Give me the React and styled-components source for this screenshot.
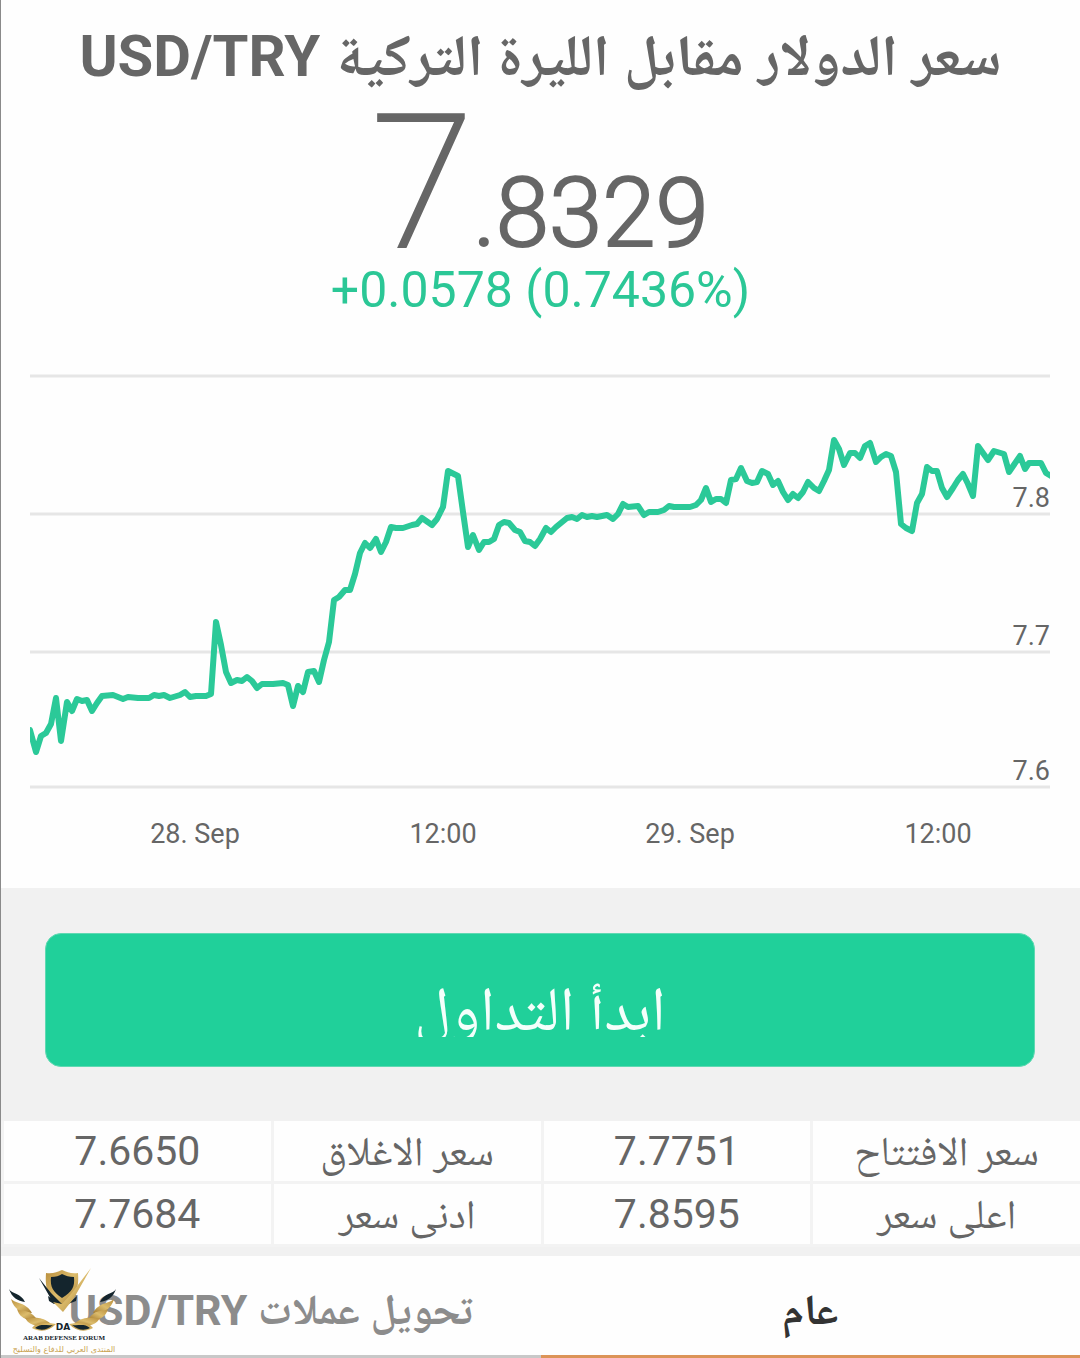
import React from "react";
import styled, { createGlobalStyle } from "styled-components";

const GlobalStyle = createGlobalStyle`
  * { box-sizing: border-box; }
  body {
    margin: 0;
    background: #fefefe;
    color: #666;
    font-family: Roboto, "Noto Naskh Arabic UI", "Noto Naskh Arabic", "DejaVu Sans", sans-serif;
  }
`;

const Page = styled.main`
  border-left: 1px solid #8a8a8a;
  background: #fefefe;
`;

const Quote = styled.header`
  display: flex;
  flex-direction: column;
  align-items: center;
  padding: 27px 16px 0;
`;

const Title = styled.h1`
  margin: 0;
  font-size: 58px;
  line-height: 72px;
  font-weight: 700;
  white-space: nowrap;
`;

const Pair = styled.bdi`
  line-height: 1;
  vertical-align: 12%;
`;

const Price = styled.div`
  display: flex;
  align-items: baseline;
  direction: ltr;
  height: 161px;
  font-weight: 300;
  font-size: 96px;
  line-height: 168px;
  -webkit-text-stroke: 2px #666;
`;

const Whole = styled.span`
  font-size: 184px;
  font-weight: 100;
  -webkit-text-stroke: 4px #666;
`;

const Change = styled.div`
  direction: ltr;
  font-size: 50px;
  line-height: 60px;
  color: #2bc796;
`;

const ChartBox = styled.section`
  padding: 50px 30px 32px 29px;
`;

const ChartSvg = styled.svg`
  display: block;
  width: 100%;
  height: auto;
  font-size: 27px;
  direction: ltr;
`;

const Cta = styled.section`
  background: #f1f1f1;
  padding: 45px 45px 54px 44px;
`;

const TradeButton = styled.button`
  display: flex;
  justify-content: center;
  align-items: flex-start;
  width: 100%;
  height: 134px;
  padding: 30px 0;
  border: 1px solid #5fd9b2;
  border-radius: 16px;
  background: #20d09a;
  color: #f4fffb;
  font-family: inherit;
  font-size: 62px;
`;

const TradeLabel = styled.span`
  display: block;
  height: 73px;
  line-height: 106px;
  padding: 0 8px;
  overflow: hidden;
`;

const StatTable = styled.table`
  width: 100%;
  table-layout: fixed;
  border-collapse: separate;
  border-spacing: 0;
  background: #f3f3f3;
  border-bottom: 9px solid #f1f1f1;
`;

const cell = `
  height: 63px;
  padding: 0;
  border: solid #f3f3f3;
  border-width: 0 0 3px 3px;
  background: #fefefe;
  text-align: center;
  vertical-align: middle;
  font-size: 41px;
  line-height: 48px;
  font-weight: 400;
  white-space: nowrap;
`;

const StatName = styled.th`
  ${cell}
  padding-top: 12px;
`;

const StatValue = styled.td`
  ${cell}
`;

const TabBar = styled.nav`
  position: relative;
  display: grid;
  grid-template-columns: 1fr 1fr;
`;

const Tab = styled.button`
  height: 102px;
  padding: 16px 0 0;
  border: 0;
  border-bottom: 3px solid ${(p) => (p.$active ? "#dc9458" : "#c8c8c8")};
  background: #fefefe;
  color: ${(p) => (p.$active ? "#333" : "#8c8c8c")};
  font-family: inherit;
  font-size: 43px;
  font-weight: 700;
  white-space: nowrap;
`;

const Watermark = styled.svg`
  position: absolute;
  left: 7px;
  bottom: 0;
  width: 112px;
  height: 90px;
  pointer-events: none;
`;

const LINE = [
  [30, 730], [36, 752], [41, 736], [46, 733], [51, 724], [56, 698], [61, 741], [67, 702], [72, 711], [77, 699],
  [82, 701], [87, 700], [92, 711], [97, 703], [102, 696], [113, 695], [118, 697], [123, 699], [128, 697], [138, 698],
  [149, 698], [154, 695], [159, 696], [164, 695], [170, 698], [180, 695], [185, 692], [190, 697], [196, 696], [206, 696],
  [211, 694], [216, 622], [221, 645], [226, 672], [231, 683], [237, 680], [242, 681], [247, 677], [252, 681], [257, 688],
  [262, 684], [273, 684], [283, 683], [288, 685], [293, 706], [298, 686], [303, 692], [308, 672], [314, 671], [319, 682],
  [324, 660], [329, 642], [334, 600], [339, 597], [345, 590], [350, 590], [355, 574], [360, 553], [365, 543], [370, 548],
  [376, 539], [381, 552], [386, 542], [391, 527], [396, 528], [403, 528], [412, 525], [417, 524], [422, 518], [432, 525],
  [437, 519], [443, 507], [448, 471], [458, 476], [463, 512], [468, 547], [473, 535], [479, 550], [484, 542], [489, 542],
  [494, 539], [499, 525], [504, 522], [509, 523], [515, 530], [520, 532], [525, 541], [530, 542], [535, 546], [540, 539],
  [546, 528], [551, 532], [556, 527], [567, 518], [572, 517], [577, 519], [582, 515], [587, 517], [592, 516], [597, 517],
  [607, 515], [613, 519], [618, 514], [623, 504], [628, 507], [638, 506], [644, 515], [649, 512], [658, 512], [664, 510],
  [669, 506], [674, 507], [690, 507], [696, 505], [701, 500], [706, 488], [711, 502], [716, 499], [721, 499], [726, 503],
  [731, 480], [736, 479], [741, 468], [747, 481], [752, 483], [757, 482], [762, 471], [768, 474], [773, 485], [778, 481],
  [783, 492], [788, 500], [793, 494], [798, 498], [803, 492], [808, 482], [814, 488], [819, 491], [824, 481], [829, 470],
  [834, 440], [839, 449], [844, 465], [850, 453], [855, 453], [860, 458], [865, 446], [870, 443], [876, 462], [881, 457],
  [886, 454], [891, 456], [896, 472], [901, 524], [906, 528], [912, 531], [917, 503], [922, 494], [927, 467], [932, 471],
  [937, 471], [942, 488], [947, 497], [953, 488], [958, 480], [963, 474], [968, 484], [973, 496], [978, 446], [983, 453],
  [988, 460], [994, 451], [1004, 454], [1009, 472], [1020, 456], [1025, 469], [1029, 463], [1041, 463], [1046, 473], [1051, 476],
];

const GRID = [376, 514, 652, 787];
const VALUES = [["7.8", 507], ["7.7", 645], ["7.6", 780]];
const TIMES = [["28. Sep", 195], ["12:00", 443], ["29. Sep", 690], ["12:00", 938]];

function PriceChart() {
  return (
    <ChartBox>
      <ChartSvg viewBox="30 370 1020 486" role="img" aria-label="USD/TRY">
        {GRID.map((y) => (
          <line key={y} x1="30" x2="1050" y1={y} y2={y} stroke="#e6e6e6" strokeWidth="3" />
        ))}
        <polyline
          points={LINE.map((p) => p.join(",")).join(" ")}
          fill="none"
          stroke="#2bc998"
          strokeWidth="6"
          strokeLinejoin="round"
          strokeLinecap="round"
        />
        {VALUES.map(([label, y]) => (
          <text key={label} x="1050" y={y} textAnchor="end" fill="#666">{label}</text>
        ))}
        {TIMES.map(([label, x]) => (
          <text key={x} x={x} y="843" textAnchor="middle" fill="#666">{label}</text>
        ))}
      </ChartSvg>
    </ChartBox>
  );
}

function Wing() {
  return (
    <g>
      <path d="M1 21 C4 26 13 25 17 34 C10 33 4 30 1 21Z" fill="#14252d" />
      <path d="M3 31 C8 36 18 34 24 45 C14 45 6 42 3 31Z" fill="url(#gold)" />
      <path d="M9 41 C15 44 21 41 28 50 C20 53 12 51 9 41Z" fill="url(#gold)" />
      <path d="M17 50 C24 51 31 47 42 55 C32 59 22 59 17 50Z" fill="url(#gold)" />
      <path d="M24 60 C31 52 38 55 48 56 C41 63 33 65 24 60Z" fill="url(#gold)" />
      <path d="M27 60 C33 55 38 58 45 57 C39 62 33 63 27 60Z" fill="#14252d" />
    </g>
  );
}

function ForumLogo() {
  return (
    <Watermark viewBox="0 0 112 90" role="img" aria-label="Arab Defense Forum">
      <defs>
        <linearGradient id="gold" x1="0" y1="0" x2="1" y2="1">
          <stop offset="0" stopColor="#b98e3c" />
          <stop offset="0.5" stopColor="#dcbc6c" />
          <stop offset="1" stopColor="#a47b30" />
        </linearGradient>
      </defs>
      <Wing />
      <g transform="translate(109 0) scale(-1 1)"><Wing /></g>
      <path d="M38 5 C45 6 49 4 54 2 C59 4 63 6 70 5 C71 20 69 28 54 40 C39 30 37 20 38 5Z" fill="url(#gold)" />
      <path d="M43 9 C48 9 51 8 54 6 C58 8 61 9 66 9 C67 19 64 24 54 30 C45 24 42 19 43 9Z" fill="#14252d" />
      <path d="M31 10 L43 25 L54 36 L54 39 L43 31Z" fill="#14252d" />
      <path d="M40 28 L50 35 L46 36 L41 33Z M69 28 L60 36 L68 33Z" fill="#14252d" />
      <path d="M83 0 L66 30 L55 44 L45 34 L54 36 L63 26Z" fill="url(#gold)" />
      <text x="55" y="62" textAnchor="middle" fontSize="9" fontWeight="700" fontFamily="DejaVu Sans, sans-serif" fill="#14252d">DA</text>
      <text x="56" y="72" textAnchor="middle" fontSize="7" fontWeight="700" fontFamily="Liberation Serif, serif" fill="#14252d">ARAB DEFENSE FORUM</text>
      <text x="56" y="84" textAnchor="middle" fontSize="8" fontFamily="DejaVu Sans, sans-serif" fill="#c9a250" direction="rtl">المنتدى العربي للدفاع والتسليح</text>
    </Watermark>
  );
}

const STATS = [
  [["سعر الافتتاح", "7.7751"], ["سعر الاغلاق", "7.6650"]],
  [["اعلى سعر", "7.8595"], ["ادنى سعر", "7.7684"]],
];

export default function App() {
  return (
    <Page dir="rtl" lang="ar">
      <GlobalStyle />
      <Quote>
        <Title>سعر الدولار مقابل الليرة التركية <Pair>USD/TRY</Pair></Title>
        <Price><Whole>7</Whole><span>.8329</span></Price>
        <Change>+0.0578 (0.7436%)</Change>
      </Quote>
      <PriceChart />
      <Cta>
        <TradeButton type="button"><TradeLabel>ابدأ التداول</TradeLabel></TradeButton>
      </Cta>
      <StatTable>
        <tbody>
          {STATS.map((row, i) => (
            <tr key={i}>
              {row.map(([name, value]) => (
                <React.Fragment key={name}>
                  <StatName scope="row">{name}</StatName>
                  <StatValue>{value}</StatValue>
                </React.Fragment>
              ))}
            </tr>
          ))}
        </tbody>
      </StatTable>
      <TabBar>
        <Tab type="button" $active>عام</Tab>
        <Tab type="button">تحويل عملات <Pair>USD/TRY</Pair></Tab>
        <ForumLogo />
      </TabBar>
    </Page>
  );
}
